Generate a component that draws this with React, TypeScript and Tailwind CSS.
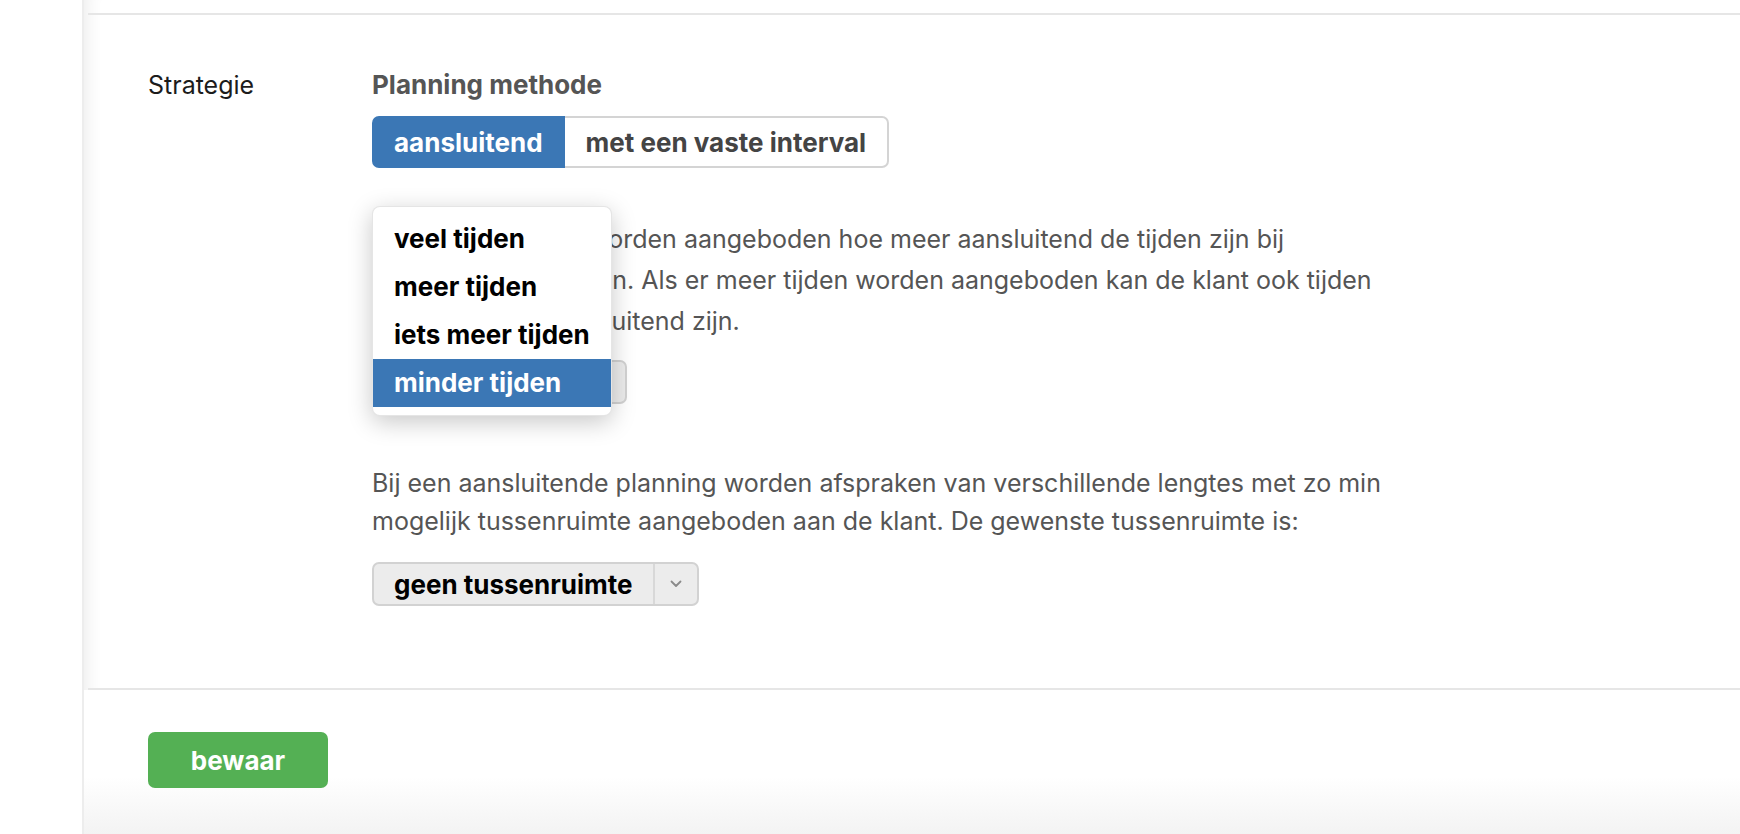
import { useState } from 'react';

const font = { fontFamily: 'Inter, "Noto Sans", sans-serif' };

const options = ['veel tijden', 'meer tijden', 'iets meer tijden', 'minder tijden'];

const Chevron = () => (
    <svg width="12" height="8" viewBox="0 0 12 8" fill="none">
        <path d="M1.5 1.5 L6 6 L10.5 1.5" stroke="#8a8a8a" strokeWidth="1.8" strokeLinecap="round" strokeLinejoin="round" />
    </svg>
);

const SelectBox = ({ value }: { value: string }) => (
    <div className="inline-flex h-[44px] items-stretch rounded-[7px] border-2 border-[#d2d2d2] bg-[#ececec]">
        <span className="flex items-center whitespace-nowrap pl-[20px] pr-[20px] text-[26px] font-bold text-black">{value}</span>
        <span className="flex w-[44px] items-center justify-center border-l-2 border-[#d8d8d8]">
            <Chevron />
        </span>
    </div>
);

const App = () => {
    const [method, setMethod] = useState('aansluitend');
    const selected = 'minder tijden';

    return (
        <div className="flex min-h-screen bg-white" style={font}>
            <div className="w-[82px] shrink-0 bg-white" />

            <div className="flex flex-1 flex-col border-l-2 border-[#ededed] shadow-[inset_18px_0_16px_-14px_rgba(0,0,0,0.07)]">
                <div className="h-[13px]" />
                <div className="ml-[4px] border-t-2 border-[#e6e6e6]" />

                {/* Strategie */}
                <section className="grid grid-cols-[224px_1fr] pl-[64px] pt-[50px] pb-[82px]">
                    <div className="text-[25px] leading-[40px] text-[#1c1c1c]">Strategie</div>

                    <div className="flex flex-col items-start">
                        <h3 className="text-[26px] font-bold leading-[40px] text-[#555]">Planning methode</h3>

                        <div className="mt-[11px] flex h-[52px]">
                            <button
                                onClick={() => setMethod('aansluitend')}
                                className={`rounded-l-[7px] px-[22px] text-[26px] font-bold ${method === 'aansluitend' ? 'bg-[#3b77b5] text-white' : 'border-2 border-[#d4d4d4] bg-white text-[#444]'}`}
                            >
                                aansluitend
                            </button>
                            <button
                                onClick={() => setMethod('interval')}
                                className={`rounded-r-[7px] px-[21px] text-[26px] font-bold ${method === 'interval' ? 'bg-[#3b77b5] text-white' : 'border-2 border-l-0 border-[#d4d4d4] bg-white text-[#444]'}`}
                            >
                                met een vaste interval
                            </button>
                        </div>

                        <p className="mt-[51px] max-w-[1020px] text-[25px] leading-[41px] text-[#555]">
                            Hoe minder tijden worden aangeboden hoe meer aansluitend de tijden zijn bij ingeplande afspraken. Als er meer tijden worden aangeboden kan de klant ook tijden kiezen die niet aansluitend zijn.
                        </p>

                        <div className="relative mt-[18px]">
                            <SelectBox value={selected} />

                            {/* open option list */}
                            <div className="absolute left-0 top-[-154px] z-10 w-[240px] rounded-[8px] border border-black/10 bg-white py-[8px] shadow-[0_6px_24px_rgba(0,0,0,0.22)]">
                                {options.map((o) => (
                                    <div
                                        key={o}
                                        className={`h-[48px] whitespace-nowrap px-[21px] text-[26px] font-bold leading-[48px] ${o === selected ? 'bg-[#3b77b5] text-white' : 'text-black'}`}
                                    >
                                        {o}
                                    </div>
                                ))}
                            </div>
                        </div>

                        <p className="mt-[60px] max-w-[1020px] text-[25px] leading-[38px] text-[#555]">
                            Bij een aansluitende planning worden afspraken van verschillende lengtes met zo min mogelijk tussenruimte aangeboden aan de klant. De gewenste tussenruimte is:
                        </p>

                        <div className="mt-[22px]">
                            <SelectBox value="geen tussenruimte" />
                        </div>
                    </div>
                </section>

                <div className="ml-[4px] border-t-2 border-[#e6e6e6]" />

                <footer className="flex-1 bg-gradient-to-b from-white from-60% to-[#f3f3f3] pl-[64px] pt-[42px]">
                    <button className="h-[56px] w-[180px] rounded-[7px] bg-[#54b054] text-[26px] font-bold text-white">
                        bewaar
                    </button>
                </footer>
            </div>
        </div>
    );
};

export default App;
